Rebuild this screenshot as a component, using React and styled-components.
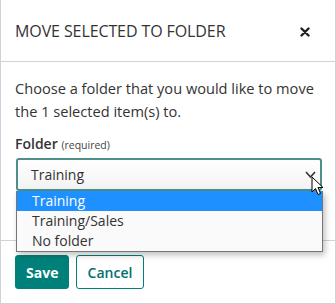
import React from "react";
import styled, { createGlobalStyle } from "styled-components";

const Global = createGlobalStyle`
  html, body { margin: 0; padding: 0; background: #fff; }
  body { font-family: "Open Sans", "Noto Sans", sans-serif; color: #333; }
  * { box-sizing: border-box; }
`;

const Modal = styled.div`
  width: 336px;
  height: 304px;
  border: 1px solid #cfd3d9;
  border-top: none;
  background: #fff;
  display: flex;
  flex-direction: column;
  overflow: hidden;
`;

const Header = styled.div`
  height: 62px;
  flex: none;
  display: flex;
  align-items: center;
  justify-content: space-between;
  padding: 0 25px 0 14px;
  border-bottom: 1px solid #cfd3d9;
`;

const Title = styled.h2`
  margin: 0;
  font-size: 16px;
  font-weight: 400;
  color: #333;
  letter-spacing: -0.1px;
`;

const Close = styled.button`
  border: none;
  background: none;
  padding: 0;
  width: 10px;
  height: 10px;
  display: flex;
  align-items: center;
  justify-content: center;
  margin-top: 2px;
`;

const Body = styled.div`
  flex: 1;
  padding: 15px 15px 0 14px;
`;

const Text = styled.p`
  margin: 0;
  font-size: 14.6px;
  line-height: 22.5px;
  color: #333;
`;

const Label = styled.div`
  margin-top: 11px;
  font-size: 14px;
  font-weight: 600;
  line-height: 22px;
  color: #333;
`;

const Hint = styled.span`
  font-size: 10.5px;
  font-weight: 400;
  color: #444;
`;

const Field = styled.div`
  position: relative;
  margin-top: 2px;
  width: 306px;
  margin-left: 1px;
`;

const Select = styled.div`
  height: 33px;
  border: 2px solid #4e8f8a;
  border-radius: 3px;
  background: linear-gradient(#fff, #f3f3f3);
  display: flex;
  align-items: center;
  justify-content: space-between;
  padding: 0 4px 0 13px;
  font-size: 14px;
  color: #333;
`;

const List = styled.ul`
  position: absolute;
  left: 0;
  top: 33px;
  width: 307px;
  margin: 0;
  padding: 0;
  list-style: none;
  background: #fafafa;
  border: 1px solid #767676;
  border-top: none;
  box-shadow: 2px 3px 6px rgba(0, 0, 0, 0.25);
  z-index: 2;
`;

const Option = styled.li`
  height: 20px;
  line-height: 20px;
  padding-left: 15px;
  font-size: 14px;
  color: ${(p) => (p.$active ? "#fff" : "#333")};
  background: ${(p) => (p.$active ? "#1e90ff" : "transparent")};
`;

const Cursor = styled.svg`
  position: absolute;
  left: 295px;
  top: 18px;
  z-index: 3;
`;

const Footer = styled.div`
  flex: none;
  border-top: 1px solid #cfd3d9;
  padding: 14px 14px 14px 14px;
  display: flex;
  gap: 7px;
`;

const Button = styled.button`
  height: 34px;
  padding: 0 10px;
  border-radius: 3px;
  font-family: "Open Sans", "Noto Sans", sans-serif;
  font-size: 14px;
  font-weight: ${(p) => (p.$primary ? 700 : 600)};
  border: 1px solid #00807a;
  background: ${(p) => (p.$primary ? "#00807a" : "#fff")};
  color: ${(p) => (p.$primary ? "#fff" : "#00716c")};
  width: ${(p) => (p.$primary ? "54px" : "68px")};
`;

export default function App() {
  return (
    <>
      <Global />
      <Modal>
        <Header>
          <Title>MOVE SELECTED TO FOLDER</Title>
          <Close aria-label="Close">
            <svg width="10" height="10" viewBox="0 0 10 10">
              <path d="M1.5 1.5 L8.5 8.5 M8.5 1.5 L1.5 8.5" stroke="#222" strokeWidth="2.4" strokeLinecap="round" />
            </svg>
          </Close>
        </Header>
        <Body>
          <Text>
            Choose a folder that you would like to move the 1 selected item(s) to.
          </Text>
          <Label>
            Folder <Hint>(required)</Hint>
          </Label>
          <Field>
            <Select>
              <span>Training</span>
              <svg width="11" height="7" viewBox="0 0 11 7">
                <path d="M1 1 L5.5 6 L10 1" fill="none" stroke="#333" strokeWidth="1.6" />
              </svg>
            </Select>
            <List>
              <Option $active>Training</Option>
              <Option>Training/Sales</Option>
              <Option>No folder</Option>
            </List>
            <Cursor width="13" height="21" viewBox="0 0 13 21">
              <path d="M1 1 L1 16 L4.5 12.5 L7 18.5 L9.5 17.5 L7 11.5 L12 11.5 Z" fill="#fff" stroke="#000" strokeWidth="1" strokeLinejoin="round" />
            </Cursor>
          </Field>
        </Body>
        <Footer>
          <Button $primary>Save</Button>
          <Button>Cancel</Button>
        </Footer>
      </Modal>
    </>
  );
}
